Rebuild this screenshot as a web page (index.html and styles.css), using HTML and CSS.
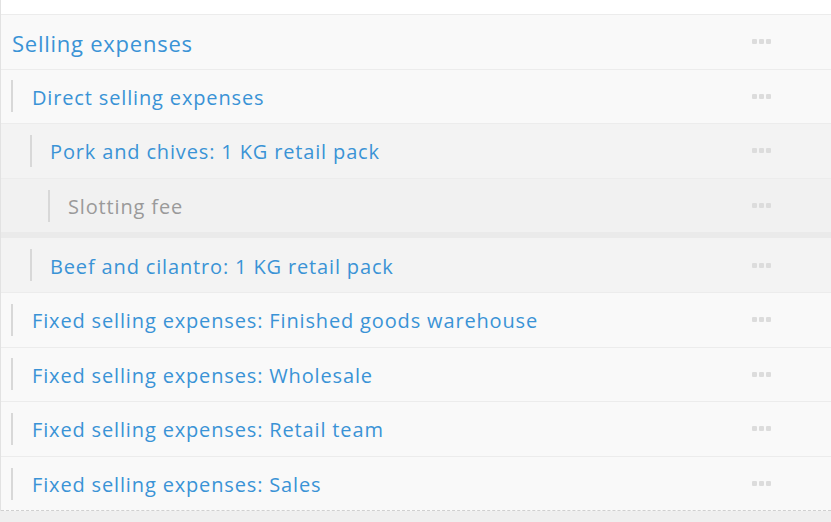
FILE: index.html
```html
<!DOCTYPE html>
<html lang="en">
<head>
    <meta charset="UTF-8">
    <title>Selling expenses</title>
    <link rel="stylesheet" href="styles.css">
</head>
<body>
    <div class="lista">
        <div class="sor fo">
            <span class="nev">Selling expenses</span>
            <span class="pontok"><i></i><i></i><i></i></span>
        </div>
        <div class="sor l1">
            <span class="vonal"></span>
            <span class="nev">Direct selling expenses</span>
            <span class="pontok"><i></i><i></i><i></i></span>
        </div>
        <div class="sor l2 sotet">
            <span class="vonal"></span>
            <span class="nev">Pork and chives: 1 KG retail pack</span>
            <span class="pontok"><i></i><i></i><i></i></span>
        </div>
        <div class="sor l3 sotetebb">
            <span class="vonal"></span>
            <span class="nev szurke">Slotting fee</span>
            <span class="pontok"><i></i><i></i><i></i></span>
        </div>
        <div class="sor l2 sotet elvalaszto">
            <span class="vonal"></span>
            <span class="nev">Beef and cilantro: 1 KG retail pack</span>
            <span class="pontok"><i></i><i></i><i></i></span>
        </div>
        <div class="sor l1">
            <span class="vonal"></span>
            <span class="nev">Fixed selling expenses: Finished goods warehouse</span>
            <span class="pontok"><i></i><i></i><i></i></span>
        </div>
        <div class="sor l1">
            <span class="vonal"></span>
            <span class="nev">Fixed selling expenses: Wholesale</span>
            <span class="pontok"><i></i><i></i><i></i></span>
        </div>
        <div class="sor l1">
            <span class="vonal"></span>
            <span class="nev">Fixed selling expenses: Retail team</span>
            <span class="pontok"><i></i><i></i><i></i></span>
        </div>
        <div class="sor l1 utolso">
            <span class="vonal"></span>
            <span class="nev">Fixed selling expenses: Sales</span>
            <span class="pontok"><i></i><i></i><i></i></span>
        </div>
    </div>
</body>
</html>
```
FILE: styles.css
```css
body{
    margin:0;
    background:#efefef;
    font-family:"Open Sans", "Noto Sans", sans-serif;
}
.lista{
    background:#fff;
    padding-top:14px;
    border-left:1px solid #e2e2e2;
}
.sor{
    display:flex;
    align-items:center;
    box-sizing:border-box;
    height:54.6px;
    padding-top:2px;
    background:#f9f9f9;
    border-top:1px solid #ececec;
    font-size:20px;
    letter-spacing:0.85px;
    color:#3a93d6;
}
.sor.fo{
    font-size:22px;
    letter-spacing:0.75px;
    padding-left:11px;
}
.sotet{
    background:#f3f3f3;
}
.sotetebb{
    background:#f1f1f1;
}
.elvalaszto{
    border-top:6px solid #eaeaea;
    height:59.6px;
}
.utolso{
    border-bottom:1px dashed #cfcfcf;
    height:55.6px;
}
.vonal{
    width:2px;
    height:32px;
    background:#d8d8d8;
    margin-right:19px;
    margin-top:-2px;
}
.l1 .vonal{ margin-left:10px; }
.l2 .vonal{ margin-left:29px; margin-right:18px; }
.l3 .vonal{ margin-left:47px; margin-right:18px; }
.nev{
    flex:1;
}
.szurke{
    color:#9a9a9a;
}
.pontok{
    display:flex;
    gap:2px;
    margin-right:60px;
    margin-top:-2px;
}
.pontok i{
    width:5px;
    height:5px;
    border-radius:1px;
    background:#dcdcdc;
}
```
